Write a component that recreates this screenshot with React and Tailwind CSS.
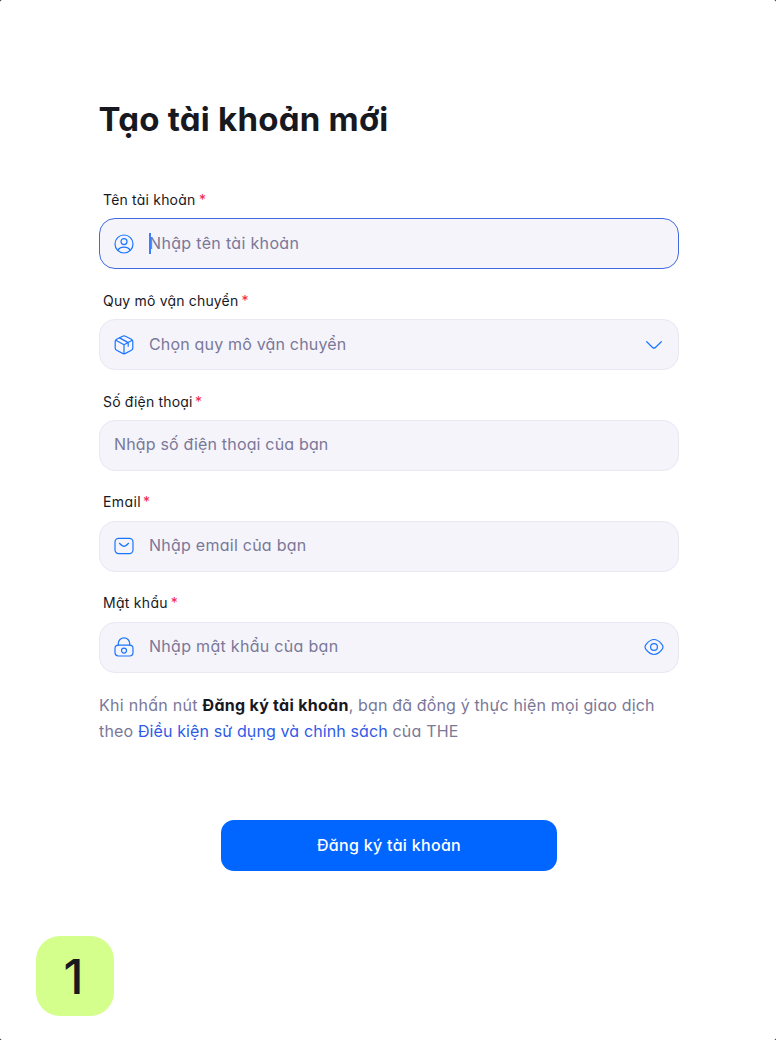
const iconProps = {
  width: 20,
  height: 20,
  viewBox: "0 0 20 20",
  fill: "none",
  stroke: "#1a75ff",
  strokeWidth: 1.2,
  strokeLinecap: "round",
  strokeLinejoin: "round",
  className: "shrink-0",
};

function UserIcon() {
  return (
    <svg {...iconProps}>
      <circle cx="10" cy="10" r="9" />
      <circle cx="10" cy="7.6" r="3" />
      <path d="M3.9 16.5C4.7 14.4 7 13.2 10 13.2s5.300 1.200 6.100 3.300" />
    </svg>
  );
}

function BoxIcon() {
  return (
    <svg {...iconProps}>
      <path d="M8.600 1.200c.9-.4 1.900-.4 2.800 0l6 3.100c.9.5 1.400 1.200 1.400 2.200v6.600c0 1-.5 1.800-1.400 2.200l-6 3.100c-.9.4-1.900.4-2.800 0l-6-3.100c-.9-.4-1.400-1.200-1.400-2.200V6.500c0-1 .5-1.700 1.400-2.200z" />
      <path d="M1.800 5.300 10 9.800l8.200-4.500M10 9.800v9M5.600 2.900l8.600 4.700v3.600" />
    </svg>
  );
}

function MailIcon() {
  return (
    <svg {...iconProps}>
      <rect x="1" y="2.400" width="18" height="15.200" rx="3.600" />
      <path d="M5.400 7.300c2.600 2.500 3.500 3 4.600 3s2-.5 4.600-3" />
    </svg>
  );
}

function LockIcon() {
  return (
    <svg {...iconProps}>
      <rect x="1" y="8.200" width="18" height="10.800" rx="3.400" />
      <path d="M4.300 8.200V6.500a5.700 5.700 0 0 1 11.400 0v1.700" />
      <circle cx="10" cy="13.600" r="2.500" />
    </svg>
  );
}

function EyeIcon() {
  return (
    <svg {...iconProps}>
      <path d="M1 10c0-1.300.6-2.200 1.500-3.200C4.400 4.600 6.900 2.500 10 2.500s5.600 2.100 7.500 4.300c.9 1 1.500 1.900 1.500 3.200s-.6 2.200-1.500 3.200c-1.900 2.200-4.400 4.300-7.500 4.300s-5.600-2.100-7.500-4.300C1.600 12.200 1 11.300 1 10z" />
      <circle cx="10" cy="10" r="3.400" />
    </svg>
  );
}

function ChevronIcon() {
  return (
    <svg {...iconProps}>
      <path d="m2.700 6.700 5.900 5.800c.9.9 1.900.9 2.800 0l5.900-5.800" />
    </svg>
  );
}

const fields = [
  {
    label: "Tên tài khoản", labelClass: "tracking-[0.2px]", starClass: "ml-[3.500px]",
    placeholder: "Nhập tên tài khoản", textClass: "tracking-[0.33px]",
    Icon: UserIcon, focused: true,
  },
  {
    label: "Quy mô vận chuyển", labelClass: "tracking-[0.18px]", starClass: "ml-[3px]",
    placeholder: "Chọn quy mô vận chuyển", textClass: "tracking-[0.18px]",
    Icon: BoxIcon, Trailing: ChevronIcon,
  },
  {
    label: "Số điện thoại", labelClass: "tracking-[0.17px]", starClass: "ml-[2.500px]",
    placeholder: "Nhập số điện thoại của bạn", textClass: "tracking-[0.17px]",
  },
  {
    label: "Email", labelClass: "tracking-[0.4px]", starClass: "ml-[2px]",
    placeholder: "Nhập email của bạn", textClass: "tracking-[0.25px]",
    Icon: MailIcon,
  },
  {
    label: "Mật khẩu", labelClass: "tracking-[0.28px]", starClass: "ml-[3px]",
    placeholder: "Nhập mật khẩu của bạn", textClass: "tracking-[0.3px]",
    Icon: LockIcon, Trailing: EyeIcon,
  },
];

function Field({ label, labelClass, starClass, placeholder, textClass, Icon, Trailing, focused }) {
  return (
    <div>
      <div className="flex h-[18px] items-center pl-1 text-[14px] leading-[18px] text-[#18181f]">
        <span className={labelClass}>{label}</span>
        <span className={`text-[#f3234c] ${starClass}`}>*</span>
      </div>
      <div
        className={`mt-[9.400px] flex h-[51px] items-center rounded-[16px] border bg-[#f5f4fa] px-[14px] ${
          focused ? "border-[#4169e1]" : "border-[#e9e8f3]"
        }`}
      >
        {Icon && (
          <span className="mr-[15px] flex">
            <Icon />
          </span>
        )}
        <span className="relative pb-[2px] text-[16px] leading-6 text-[#7a7899]">
          {focused && <span className="absolute top-[2px] left-0 h-[21px] w-[2px] bg-[#3d7dff]" />}
          <span className={textClass}>{placeholder}</span>
        </span>
        {Trailing && (
          <span className="ml-auto flex">
            <Trailing />
          </span>
        )}
      </div>
    </div>
  );
}

export default function App() {
  return (
    <div className="h-[1040px] w-[776px] bg-black font-['Inter','Noto_Sans',sans-serif] [font-feature-settings:'cv11']">
      <div className="flex h-full flex-col rounded-[2px] bg-white pt-[98px] pl-[99px]">
        <h1 className="-ml-[0.500px] text-[33px] leading-[42px] font-bold tracking-[0.24px] text-[#18181f]">
          Tạo tài khoản mới
        </h1>
        <div className="mt-[51px] flex w-[580px] flex-col gap-[22.400px]">
          {fields.map((field) => (
            <Field key={field.label} {...field} />
          ))}
        </div>
        <p className="mt-[19px] text-[16px] leading-[26px] whitespace-nowrap text-[#7a7899]">
          <span className="tracking-[0.28px]">Khi nhấn nút </span>
          <b className="font-bold tracking-[0.28px] text-[#18181f]">Đăng ký tài khoản</b>
          <span className="tracking-[0.15px]">, bạn đã đồng ý thực hiện mọi giao dịch</span>
          <br />
          <span className="tracking-[0.15px]">theo </span>
          <a className="tracking-[0.12px] text-[#2f5be8]">Điều kiện sử dụng và chính sách</a>
          <span className="tracking-[0.18px]"> của THE</span>
        </p>
        <button className="mt-[76px] ml-[122px] h-[51px] w-[336px] shrink-0 rounded-[13px] bg-[#0066ff] pb-[1px] text-[16px] font-medium tracking-[0.3px] text-white">
          Đăng ký tài khoản
        </button>
        <div className="mt-[65px] -ml-[63px] flex h-[80px] w-[78px] shrink-0 items-center justify-center rounded-[24px] bg-[#d4ff8c] pt-[2px] pr-[3px] text-[48px] leading-none font-medium text-[#18181f]">
          1
        </div>
      </div>
    </div>
  );
}
